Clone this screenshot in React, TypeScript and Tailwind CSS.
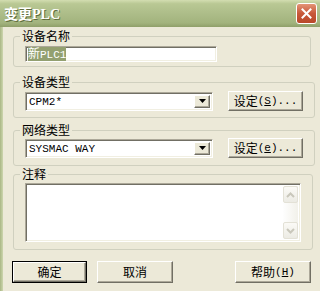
import React from "react";

const font = "font-['Noto_Sans_CJK_SC','Liberation_Sans',sans-serif]";
const mono = "font-['Liberation_Mono','Noto_Sans_CJK_SC',monospace] text-[11px]";

const sunken =
	"border border-t-[#aca899] border-l-[#aca899] border-b-white border-r-white shadow-[inset_1px_1px_0_#716f64,inset_-1px_-1px_0_#f1efe2]";
const raised =
	"border border-t-white border-l-white border-b-[#716f64] border-r-[#716f64] shadow-[inset_-1px_-1px_0_#aca899]";

interface IBtnProps {
	className?: string;
	isDefault?: boolean;
}

const Btn: React.FC<React.PropsWithChildren<IBtnProps>> = ({ className, isDefault, children }) => {
	return (
		<div className={`${className} flex ${isDefault ? "border border-black" : ""}`}>
			<div className={`flex-1 flex items-center justify-center bg-[#ece9d8] text-[12px] text-black ${raised}`}>
				{children}
			</div>
		</div>
	);
};

const Combo: React.FC<{ value: string }> = ({ value }) => {
	return (
		<div className={`w-[188px] h-[19px] bg-white flex items-stretch p-[2px] ${sunken}`}>
			<span className={`flex-1 pl-[1px] leading-[14px] ${mono}`}>{value}</span>
			<div className={`w-[16px] flex items-center justify-center bg-[#ece9d8] ${raised}`}>
				<svg width="7" height="4" viewBox="0 0 7 4">
					<path d="M0 0h7L3.5 4z" fill="#000" />
				</svg>
			</div>
		</div>
	);
};

const Group: React.FC<React.PropsWithChildren<{ label: string; className?: string }>> = ({
	label,
	className,
	children,
}) => {
	return (
		<fieldset className={`border border-[#d0d0bf] rounded-[3px] px-[11px] ${className}`}>
			<legend className="-ml-[5px] px-[2px] text-[12px] leading-[14px] text-black">{label}</legend>
			{children}
		</fieldset>
	);
};

const ScrollArrow: React.FC<{ up?: boolean }> = ({ up }) => (
	<div className="h-[17px] rounded-[2px] border border-[#e3e1d6] bg-gradient-to-b from-[#fbfaf6] to-[#ecebe4] flex items-center justify-center">
		<svg width="9" height="6" viewBox="0 0 9 6">
			<path
				d={up ? "M1 5l3.5-3.5L8 5" : "M1 1l3.5 3.5L8 1"}
				stroke="#c9c7bb"
				strokeWidth="2"
				fill="none"
			/>
		</svg>
	</div>
);

export default function App() {
	return (
		<div className={`w-[320px] h-[291px] flex flex-col bg-[#ece9d8] overflow-hidden ${font}`}>
			{/* title bar */}
			<div className="h-[27px] shrink-0 flex items-center justify-between pl-[4px] pr-[3px] bg-[linear-gradient(to_bottom,#d3ddb1_0%,#b9c894_14%,#adbd89_50%,#a2b37d_85%,#8f9f69_100%)]">
				<span className="text-white font-bold text-[14px] leading-none [text-shadow:1px_1px_0_#5d6b3a]">
					变更<span className="font-['Liberation_Serif',serif]">PLC</span>
				</span>
				<div className="w-[21px] h-[21px] rounded-[3px] border border-white bg-[linear-gradient(to_bottom,#e39476,#c8583a_50%,#b9482a)] flex items-center justify-center">
					<svg width="11" height="11" viewBox="0 0 11 11">
						<path d="M1.5 1.5l8 8M9.5 1.5l-8 8" stroke="#fff" strokeWidth="2" strokeLinecap="square" />
					</svg>
				</div>
			</div>

			<div className="flex-1 flex">
				<div className="w-[3px] bg-[linear-gradient(to_right,#a9b785,#cdd6ae)]" />
				<div className="w-[298px] ml-[10px] flex flex-col">
					<Group label="设备名称" className="mt-[2px] pt-[3px] pb-[4px]">
						<div className={`w-[192px] h-[16px] bg-white flex items-center px-[2px] ${sunken}`}>
							<span className={`bg-[#93a070] text-white leading-[12px] ${font} text-[12px]`}>
								新<span className={mono}>PLC1</span>
							</span>
						</div>
					</Group>

					<Group label="设备类型" className="mt-[8px] pt-[2px] pb-[6px]">
						<div className="flex items-center h-[20px]">
							<Combo value="CPM2*" />
							<Btn className="ml-[15px] w-[75px] h-[20px]">
								设定<span className={mono}>
									(<span className="underline">S</span>)...
								</span>
							</Btn>
						</div>
					</Group>

					<Group label="网络类型" className="mt-[5px] pt-[1px] pb-[7px]">
						<div className="flex items-center h-[20px]">
							<Combo value="SYSMAC WAY" />
							<Btn className="ml-[15px] w-[75px] h-[20px]">
								设定<span className={mono}>
									(<span className="underline">e</span>)...
								</span>
							</Btn>
						</div>
					</Group>

					<Group label="注释" className="mt-[1px] pt-[2px] pb-[7px]">
						<div className={`w-[276px] h-[59px] bg-white flex justify-end p-[2px] ${sunken}`}>
							<div className="w-[15px] flex flex-col justify-between bg-gradient-to-r from-[#fefefe] to-[#f2f1ea]">
								<ScrollArrow up />
								<ScrollArrow />
							</div>
						</div>
					</Group>

					<div className="mt-[11px] flex items-center -ml-[1px]">
						<Btn isDefault className="w-[75px] h-[22px]">
							确定
						</Btn>
						<Btn className="ml-[10px] w-[76px] h-[22px]">取消</Btn>
						<Btn className="ml-[62px] w-[76px] h-[22px]">
							帮助<span className={mono}>
								(<span className="underline">H</span>)
							</span>
						</Btn>
					</div>
				</div>
			</div>
		</div>
	);
}
